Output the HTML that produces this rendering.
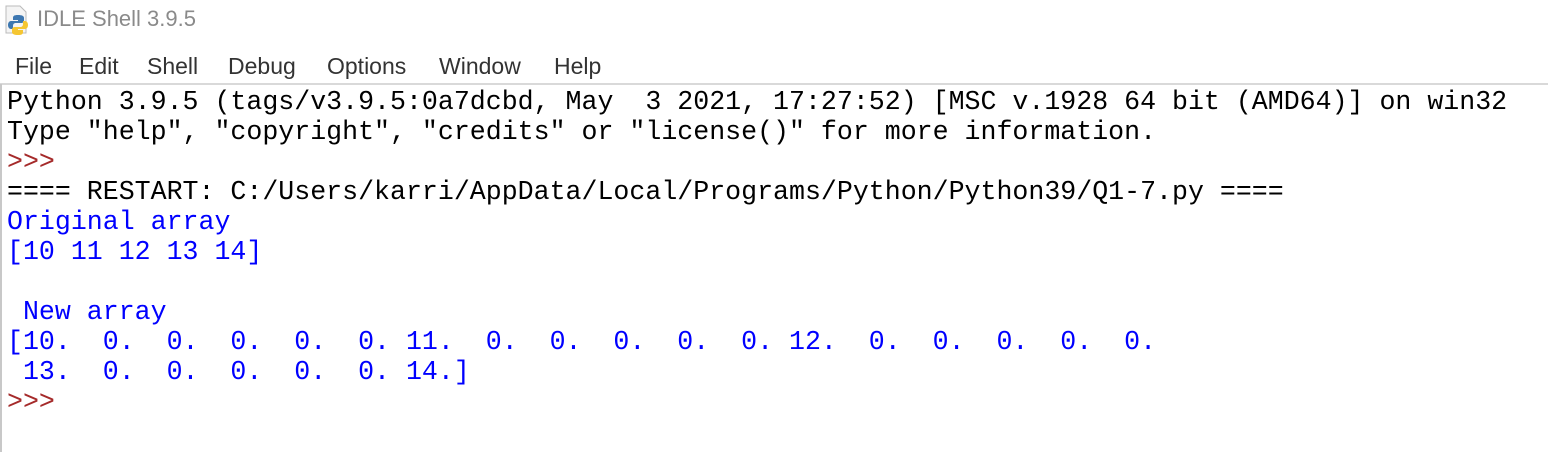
<!DOCTYPE html>
<html><head><meta charset="utf-8"><style>
html,body{margin:0;padding:0;width:1548px;height:452px;background:#fff;overflow:hidden;}
.title{position:absolute;left:37px;top:6px;font:22px "Liberation Sans",sans-serif;color:#8a8a8a;}
.menu{position:absolute;top:53px;left:15px;font:23px "Liberation Sans",sans-serif;color:#333;}
.menu span{position:absolute;white-space:nowrap;}
.sep{position:absolute;left:0;top:83px;width:1548px;height:2px;background:#d9d9d9;}
.lb{position:absolute;left:0;top:84px;width:2px;height:368px;background:#c8c8c8;}
pre{position:absolute;left:7px;top:87px;margin:0;font:26.6px/30px "Liberation Mono",monospace;color:#000;}
.p{color:#a52a2a}.o{color:#0000ff}
</style></head><body>
<svg style="position:absolute;left:4px;top:5px" width="28" height="30" viewBox="0 0 28 30">
<path d="M2 1h14l6 6v21H2z" fill="#f4f4f4" stroke="#bbb"/>
<path d="M14 10c-4 0-5 1-5 3v2h5v1H7c-2 0-3 2-3 4s1 4 3 4h2v-3c0-2 1-3 3-3h5c2 0 3-1 3-3v-2c0-2-2-3-6-3z" fill="#3d77b0"/>
<path d="M14 30c4 0 5-1 5-3v-2h-5v-1h7c2 0 3-2 3-4s-1-4-3-4h-2v3c0 2-1 3-3 3h-5c-2 0-3 1-3 3v2c0 2 2 3 6 3z" fill="#f5c632"/>
</svg>
<div class="title">IDLE Shell 3.9.5</div>
<div class="menu"><span style="left:0">File</span><span style="left:64px">Edit</span><span style="left:132px">Shell</span><span style="left:213px">Debug</span><span style="left:312px">Options</span><span style="left:424px">Window</span><span style="left:539px">Help</span></div>
<div class="sep"></div><div class="lb"></div>
<pre>Python 3.9.5 (tags/v3.9.5:0a7dcbd, May  3 2021, 17:27:52) [MSC v.1928 64 bit (AMD64)] on win32
Type "help", "copyright", "credits" or "license()" for more information.
<span class="p">&gt;&gt;&gt;</span> 
==== RESTART: C:/Users/karri/AppData/Local/Programs/Python/Python39/Q1-7.py ====
<span class="o">Original array
[10 11 12 13 14]

 New array
[10.  0.  0.  0.  0.  0. 11.  0.  0.  0.  0.  0. 12.  0.  0.  0.  0.  0.
 13.  0.  0.  0.  0.  0. 14.]</span>
<span class="p">&gt;&gt;&gt;</span> </pre>
</body></html>
